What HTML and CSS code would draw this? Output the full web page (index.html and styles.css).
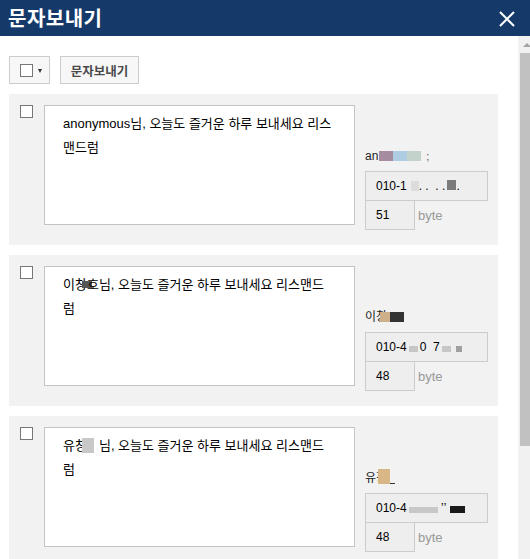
FILE: index.html
```html
<!DOCTYPE html>
<html lang="ko">
<head>
<meta charset="utf-8">
<title>문자보내기</title>
<link rel="stylesheet" href="styles.css">
</head>
<body>
<div class="header">
  <h1 class="title">문자보내기</h1>
  <span class="close" aria-label="닫기"><svg width="16" height="16" viewBox="0 0 16 16"><path d="M1 1L15 15M15 1L1 15" stroke="#fff" stroke-width="2" fill="none"/></svg></span>
</div>
<div class="frame">
  <div class="content">
    <div class="toolbar">
      <div class="btn btn-check"><span class="chk"></span><span class="caret"></span></div>
      <div class="btn btn-send">문자보내기</div>
    </div>

    <div class="card">
      <span class="chk"></span>
      <div class="msg">anonymous님, 오늘도 즐거운 하루 보내세요 리스맨드럼</div>
      <div class="info">
        <div class="name">an<span class="blk b-purple"></span><span class="blk b-blue"></span><span class="blk b-green"></span><span class="semi">;</span></div>
        <div class="phone">010-1<span class="blk b-light"></span><span class="dots">. .&nbsp;&nbsp;. .</span><span class="blk b-dark"></span>.</div>
        <div class="bytes"><span class="count">51</span><span class="unit">byte</span></div>
      </div>
    </div>

    <div class="card">
      <span class="chk"></span>
      <div class="msg">이창<span class="redact r-dark"></span>호님, 오늘도 즐거운 하루 보내세요 리스맨드럼</div>
      <div class="info">
        <div class="name">이창<span class="blk b-tan"></span><span class="blk b-black"></span></div>
        <div class="phone">010-<span class="cut">4</span><span class="blk b-light2"></span><span class="cut">0</span>&nbsp;&nbsp;<span class="cut">7</span><span class="blk b-light2"></span><span class="blk b-mid"></span></div>
        <div class="bytes"><span class="count">48</span><span class="unit">byte</span></div>
      </div>
    </div>

    <div class="card">
      <span class="chk"></span>
      <div class="msg">유창<span class="redact r-light"></span>님, 오늘도 즐거운 하루 보내세요 리스맨드럼</div>
      <div class="info">
        <div class="name">유창<span class="blk b-tan2"></span><span class="uline"></span></div>
        <div class="phone">010-4<span class="blk b-wide"></span><span class="cut">&nbsp;&#700;&#700;</span><span class="blk b-black2"></span></div>
        <div class="bytes"><span class="count">48</span><span class="unit">byte</span></div>
      </div>
    </div>
  </div>
  <div class="scrollbar"><span class="arrow"></span><span class="thumb"></span></div>
</div>
</body>
</html>
```

FILE: styles.css
```css
* { box-sizing: border-box; }
html, body { margin: 0; padding: 0; }
body {
  width: 530px;
  height: 559px;
  overflow: hidden;
  background: #fff;
  font-family: "Liberation Sans", "Noto Sans CJK KR", sans-serif;
  font-size: 12px;
  color: #000;
}

.header {
  height: 36px;
  background: #153a6a;
  display: flex;
  align-items: center;
  justify-content: space-between;
  padding: 0 15px 0 8px;
}
.title {
  margin: 0;
  color: #fff;
  font-family: "Noto Sans CJK KR", sans-serif;
  font-size: 20px;
  font-weight: 700;
  line-height: 36px;
  letter-spacing: 0.5px;
}
.close { display: flex; width: 16px; height: 16px; margin-top: 1px; }

.frame {
  display: flex;
  height: 523px;
  overflow: hidden;
}
.content {
  flex: 1;
  padding: 20px 20px 0 9px;
}
.scrollbar {
  flex: none;
  width: 12px;
  background: #f1f1f1;
  display: flex;
  flex-direction: column;
  overflow: hidden;
}
.arrow {
  display: block;
  width: 0;
  height: 0;
  margin: 7px 0 0 5px;
  border-left: 4px solid transparent;
  border-right: 4px solid transparent;
  border-bottom: 4px solid #a3a3a3;
}
.thumb {
  display: block;
  margin: 6px 0 0 2px;
  width: 10px;
  height: 393px;
  background: #c1c1c1;
}

.toolbar {
  display: flex;
  gap: 10px;
  margin-bottom: 10px;
}
.btn {
  height: 28px;
  border: 1px solid #cccccc;
  background: #f7f7f7;
  display: flex;
  align-items: center;
}
.btn-check {
  width: 41px;
  padding: 1px 0 0 10px;
  gap: 5px;
}
.caret {
  width: 0;
  height: 0;
  border-left: 2.5px solid transparent;
  border-right: 2.5px solid transparent;
  border-top: 4px solid #333;
}
.btn-send {
  width: 79px;
  justify-content: center;
  font-family: "Noto Sans CJK KR", sans-serif;
  font-weight: 700;
  font-size: 12.5px;
  color: #4a4a4a;
}

.chk {
  display: block;
  flex: none;
  width: 13px;
  height: 13px;
  border: 1px solid #777;
  background: #fff;
}

.card {
  width: 489px;
  height: 151px;
  background: #f2f2f2;
  display: flex;
  align-items: flex-start;
  padding: 11px 10px 15px 11px;
  margin-bottom: 10px;
}
.card > .chk { margin-right: 11px; }
.msg {
  flex: none;
  width: 311px;
  height: 120px;
  background: #fff;
  border: 1px solid #c4c4c4;
  padding: 6px 20px 0 18px;
  line-height: 24px;
  font-size: 13px;
  color: #000;
}
.info {
  flex: none;
  width: 123px;
  margin-left: 10px;
  align-self: stretch;
  display: flex;
  flex-direction: column;
  justify-content: flex-end;
}
.name {
  height: 20px;
  line-height: 20px;
  margin-bottom: 5px;
  color: #222;
  display: flex;
  align-items: center;
  white-space: nowrap;
}
.phone {
  height: 30px;
  border: 1px solid #cccccc;
  background: #eeeeee;
  padding-left: 10px;
  display: flex;
  align-items: center;
  white-space: nowrap;
  font-size: 12px;
}
.bytes {
  display: flex;
  align-items: center;
  margin-top: -1px;
}
.count {
  width: 50px;
  height: 30px;
  border: 1px solid #cccccc;
  background: #eeeeee;
  padding-left: 10px;
  display: flex;
  align-items: center;
}
.unit {
  margin-left: 3px;
  font-size: 13px;
  color: #999;
}

.blk { display: inline-block; flex: none; height: 10px; }
.b-purple { width: 14px; background: #a58c9f; margin-left: 1px; }
.b-blue { width: 14px; background: #aecde2; }
.b-green { width: 14px; background: #c3d2cb; }
.semi { margin-left: 5px; color: #556; font-size: 11px; }
.b-light { width: 8px; background: #dcdcdc; margin-left: 4px; }
.b-dark { width: 9px; background: #7b7b7b; margin-left: 2px; margin-top: -2px; }
.b-tan { width: 10px; background: #cdb08a; margin-left: -7px; }
.b-black { width: 14px; background: #333; }
.cut { display: inline-block; }
.b-light2 { width: 9px; height: 6px; background: #c6c6c6; margin: 4px 2px 0; }
.b-mid { width: 6px; height: 6px; background: #a0a0a0; margin: 4px 0 0 3px; }
.b-tan2 { width: 12px; height: 15px; background: #d9b685; margin-left: -9px; margin-top: -4px; }
.uline { display: inline-block; width: 5px; height: 1px; background: #333; margin-top: 10px; }
.b-wide { width: 29px; height: 6px; background: #c8c8c8; margin-left: 2px; margin-top: 4px; }
.b-black2 { width: 15px; height: 7px; background: #1a1a1a; margin-left: 4px; margin-top: 3px; }

.redact { display: inline-block; vertical-align: middle; }
.r-dark { width: 10px; height: 7px; background: #555; margin: 0 -5px 2px -5px; }
.r-light { width: 12px; height: 15px; background: #c8c8c8; margin: 0 5px 0 -5px; vertical-align: -3px; }
```
